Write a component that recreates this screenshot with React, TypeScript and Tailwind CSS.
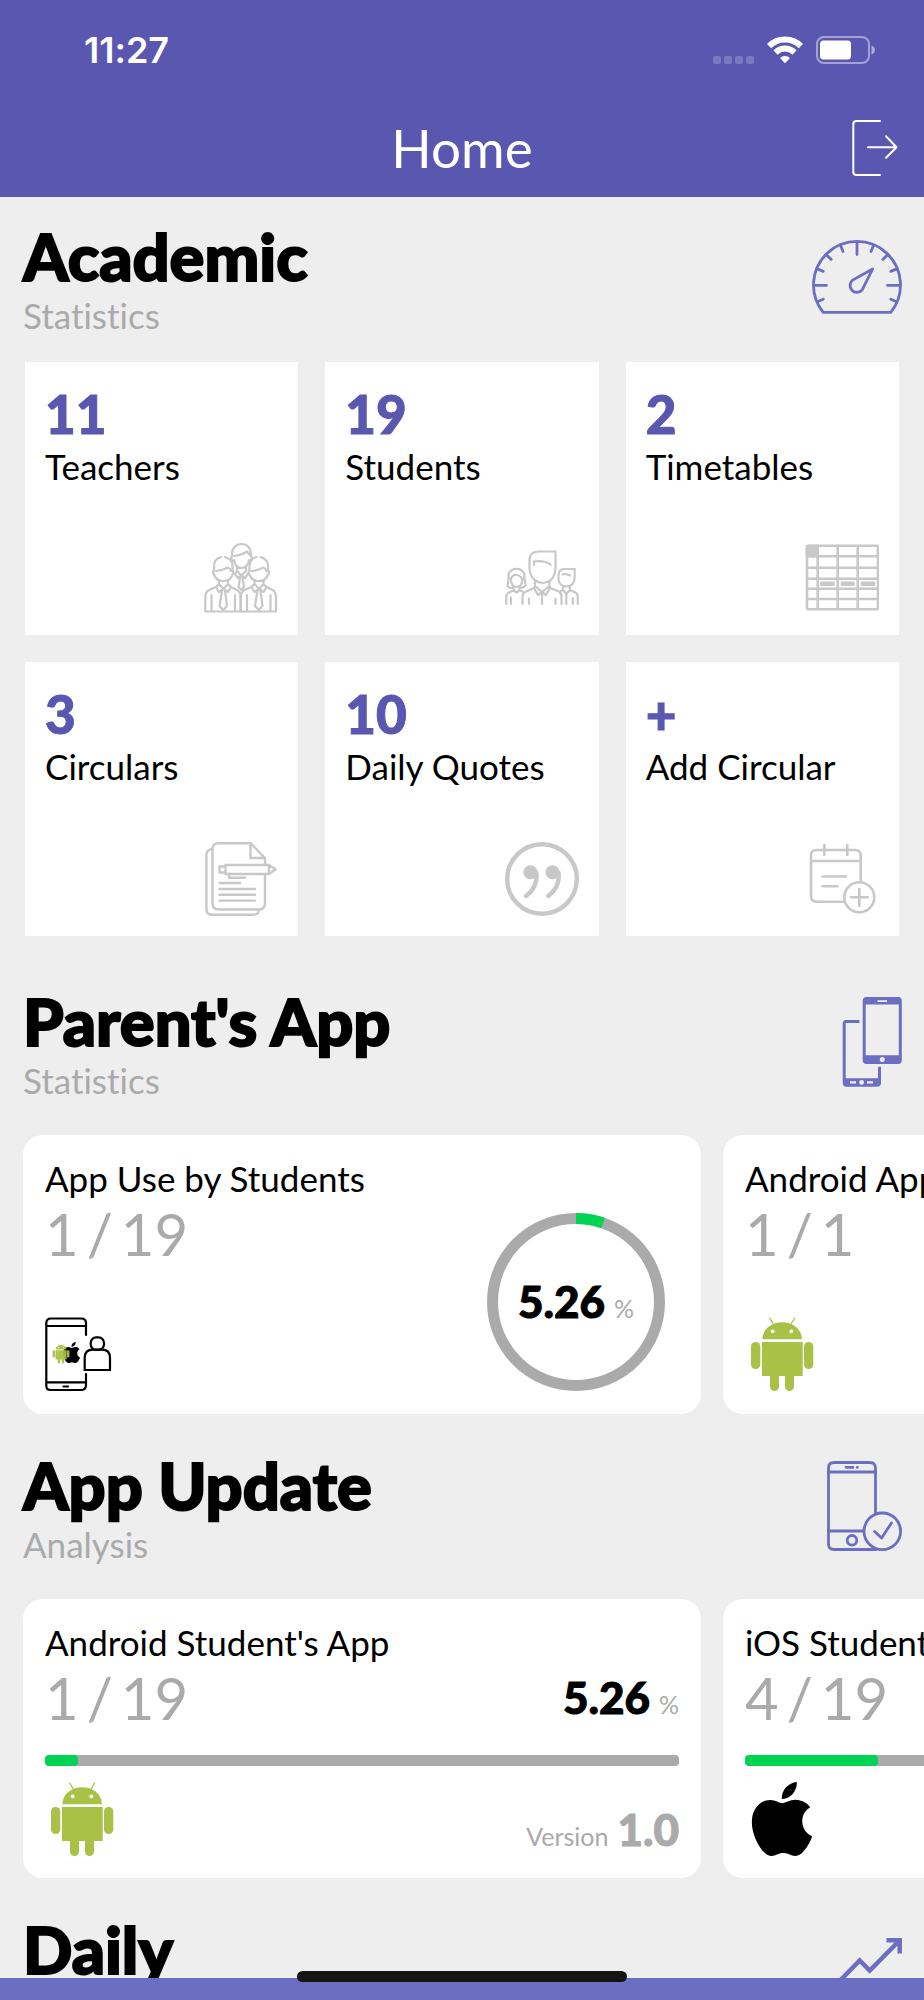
import type { ReactNode } from 'react';
import { SiApple } from 'react-icons/si';

function Wifi() {
    return (
        <svg width="36" height="28" viewBox="0 0 36 28" fill="none" stroke="white" strokeWidth="6">
            <path d="M2.1 10.1A22.5 22.5 0 0 1 33.9 10.1" />
            <path d="M8.5 16.5A13.5 13.5 0 0 1 27.5 16.5" />
            <path d="M18 27.2L13 21.9A7.3 7.3 0 0 1 23 21.9Z" fill="white" stroke="none" />
        </svg>
    );
}

function Battery() {
    return (
        <svg width="59" height="28" viewBox="0 0 59 28" fill="none">
            <rect x="1" y="1" width="52" height="26" rx="7" stroke="white" strokeOpacity="0.45" strokeWidth="2" />
            <rect x="4" y="4.500" width="31" height="19" rx="3.500" fill="white" />
            <path d="M55.500 9.500Q59 11 59 14T55.500 18.500Z" fill="white" fillOpacity="0.5" />
        </svg>
    );
}

function LogoutIcon() {
    return (
        <svg width="46" height="56" viewBox="0 0 46 56" fill="none" stroke="white" strokeWidth="2" strokeLinecap="round" strokeLinejoin="round">
            <path d="M28 1H4.500Q1.300 1 1.300 4V52Q1.300 55 4.500 55H28" />
            <path d="M16 27.300H44.500M34 16.300L44.500 27.300L34 37.700" />
        </svg>
    );
}

const TICKS = [157.5, 22.5, 202.5, 225, 247.5, 292.5, 315, 337.5];

function GaugeIcon() {
    return (
        <svg width="90" height="90" viewBox="0 0 90 90" fill="none" stroke="#6b6ec1" strokeWidth="2.800" strokeLinecap="round">
            <path d="M11.200 80.300A43.500 43.500 0 1 1 78.800 80.300Z" strokeLinejoin="round" />
            <path d="M2.500 53.300H14.500M75.500 53.300H87.500M45 10.500V22.500" />
            {TICKS.map(a => (
                <path key={a} d="M81.500 53.300H88" transform={`rotate(${a} 45 53.300)`} />
            ))}
            <path d="M60.600 37L41.500 47.600A6.800 6.800 0 1 0 50.600 57.200Z" strokeLinejoin="round" />
        </svg>
    );
}

function PhonesIcon() {
    return (
        <svg width="90" height="90" viewBox="0 0 90 90" fill="#6b6ec1">
            <path fillRule="evenodd" d="M54.500 0H86Q89.800 0 89.800 4V63Q89.800 67 86 67H54.500Q50.700 67 50.700 63V4Q50.700 0 54.500 0ZM53.700 7.500V58.300H86.800V7.500ZM65.500 3.300V5H75V3.300ZM70.300 60A2.500 2.500 0 1 0 70.300 65A2.500 2.500 0 1 0 70.300 60Z" />
            <path fillRule="evenodd" d="M34 23H47.500V26H33.700V81.300H66V69.800H69V86Q69 89.700 65 89.700H34.500Q30.700 89.700 30.700 86V27Q30.700 23 34 23ZM38 84.300V86.500H44V84.300ZM55 84.300V86.500H61V84.300ZM49.600 83A2.400 2.400 0 1 0 49.600 87.800A2.400 2.400 0 1 0 49.600 83Z" />
        </svg>
    );
}

function PhoneCheckIcon() {
    return (
        <svg width="90" height="90" viewBox="0 0 90 90" fill="none" stroke="#6b6ec1" strokeWidth="2.800" strokeLinecap="round">
            <path d="M63.500 52.500V7Q63.500 1.500 58 1.500H22Q16.500 1.500 16.500 7V83Q16.500 88.500 22 88.500H64" />
            <path d="M16.500 11H63.500M16.500 70H51M34 6.300H41M45.200 6.300H45.400" />
            <circle cx="40" cy="79.300" r="4.800" />
            <circle cx="70.300" cy="70.300" r="18.300" />
            <path d="M62.500 70.500L69.600 77L79.500 62" strokeLinejoin="round" />
        </svg>
    );
}

function TrendIcon() {
    return (
        <svg width="90" height="90" viewBox="0 0 90 90" fill="none" stroke="#6b6ec1" strokeWidth="4.500">
            <path d="M12 72L47.700 35.500L57.700 45.500L87 16M74.500 15.300H87.700V28.500" />
        </svg>
    );
}

function TileSvg({ width = 2.4, children }: { width?: number; children: ReactNode }) {
    return (
        <svg width="74" height="74" viewBox="0 0 74 74" fill="none" stroke="#c8c8c8" strokeWidth={width} strokeLinecap="round" strokeLinejoin="round">
            {children}
        </svg>
    );
}

// Bust with shirt and tie, drawn around x = 19
function Teacher() {
    return (
        <>
            <path d="M17 16Q10 18 10 25V29M21 16Q28.500 18 28.500 25V29M10 29Q8 31 10.200 34Q12.500 40 19.300 40T28.400 34Q30.500 31 28.500 29M12 30Q18 29.500 24 26.500Q26 27 27 30" />
            <path d="M15 40V43L19.500 48L24 43V40M15 43L12 46L15 51L19.500 48L24 51L27 46L24 43" />
            <path d="M12 46L5 49Q1.300 51 1.300 56V70.500H36.500V56Q36.500 51 33 49L27 46M7.500 54V70M31 54V70" />
            <path d="M18 49.500L15.500 65L19.300 69L23 65L21 49.500" />
        </>
    );
}

function TeachersIcon() {
    return (
        <TileSvg width={2.2}>
            <path d="M28 15V12.500A9.500 9.500 0 0 1 47 12.500V15M28 15Q26 17 28.500 20M47 15Q49 17 46.500 20M30 15Q38 14 43 10.500L46 14M30 19Q31 27 37.300 27T45 19M33 27V30L37.300 34.500L42 30V27M33 30L31 33L34 37L37.300 34.500L41 37L44 33M36 37L34.500 46L37.300 49L40 46L38.500 37" />
            <Teacher />
            <g transform="translate(35.500 0)">
                <Teacher />
            </g>
        </TileSvg>
    );
}

function StudentsIcon() {
    return (
        <TileSvg width={2.2}>
            <path d="M24.500 27V18Q25 10.500 34 10.500H50.500V27Q50 35 46 39Q37.500 45 29.500 39Q25 35 24.500 27ZM29 24V20.500Q39 19 45.500 23.500" />
            <path d="M30 41V45L37 51L44.500 45V41M30 45L29 47L33 54L37 51L41 54L45 47L44.500 45M29 47L20 51Q17.500 52.500 17.500 56V63M45 47L54 50.500Q56.500 52 56.500 56V63M24 57.500V63M50.500 57.500V63M37 51V63" />
            <path d="M2.500 45Q4 37 3.500 33Q6 27.800 11.500 27.800T19.500 33Q19 39 20.800 44Q18 48 14.500 46.500M2.500 45Q5 48 8.500 46.500M5.500 38Q8 33 11 34Q15 34 17.500 38M6 38Q6 46 11.500 46T17.500 38M8.500 46V49.500L11.500 51.500L14.500 49.500V46M8.500 49.500L3 52Q1.200 53.500 1.200 57V63M6 56.500V63M14.500 49.500L17.500 50.500" />
            <path d="M53.500 38Q52.500 28.500 59 28H69.700V36Q69.500 45 61.500 45.500Q54 45 53.500 38ZM57.500 33.500Q61 32.500 65 34.500M58 45.500V49L61.500 53L65 49V45.500M65 49L71 52Q72.800 53 72.800 57V63M61.300 53V63M67.800 57V63M58 49L55 50.500" />
        </TileSvg>
    );
}

function TimetableIcon() {
    return (
        <TileSvg width={2.6}>
            <rect x="2" y="4.700" width="71" height="63.600" rx="1.500" />
            <path d="M12.700 5V68M32.700 5V68M52.700 5V68M2 15.300H73M2 26.700H73M2 37.700H73M2 47.700H73M2 58H73" />
            <path d="M2 5H12.700V15H2ZM16.500 41.700H28.500V43.700H16.500ZM37 41.700H48.500V43.700H37ZM57 41.700H69V43.700H57Z" fill="#c8c8c8" />
        </TileSvg>
    );
}

function CircularIcon() {
    return (
        <TileSvg>
            <path d="M61 22.500V16L46.500 1.200H15Q8.500 1.200 8.500 7V61Q8.500 67.500 15 67.500H55Q61 67.500 61 61V33M46.500 1.200V16H61" />
            <path d="M8 7Q2.400 8 2.400 13V67Q2.400 72.800 8 72.800H49Q54.500 72.800 55 68" />
            <path d="M21.500 23H65L71.500 27.500L65 32H21.500ZM21.500 24.500H15.500V30.500H21.500M65 23V32" />
            <path d="M25 32V35.700H41M15.500 41H36M15.500 47H51M15.500 52.800H51M15.500 58.600H51" />
        </TileSvg>
    );
}

function QuoteIcon() {
    return (
        <TileSvg width={4.4}>
            <circle cx="37" cy="37" r="34.800" />
            <path d="M31.500 31Q32.500 46 21 54M53.700 31Q54.700 46 43.200 54" />
            <path d="M25.300 25.500A4.800 4.800 0 1 0 25.400 25.500ZM47.500 25.500A4.800 4.800 0 1 0 47.600 25.500Z" fill="#c8c8c8" />
        </TileSvg>
    );
}

function AddCircularIcon() {
    return (
        <TileSvg width={2.6}>
            <path d="M55.700 39V13.500Q55.700 8 50 8H11.500Q6 8 6 13.500V54Q6 59.700 11.500 59.700H38.500M6 19H55.500M19.300 3V13M42.300 3V13M17.500 34.500H41M17.500 44.300H32.500" />
            <circle cx="54.300" cy="55.300" r="15" />
            <path d="M46 55.300H62.700M54.300 47V63.700" />
        </TileSvg>
    );
}

function Robot() {
    return (
        <g fill="#a9c147">
            <path d="M24.700 1L28.500 7.500M49.700 1L45.800 7.500" stroke="#a9c147" strokeWidth="1.300" strokeLinecap="round" />
            <path d="M17.300 22.300C18.500 -0.300 55.800 -0.300 57 22.300Z" />
            <circle cx="27.700" cy="14.300" r="1.900" fill="white" />
            <circle cx="46.300" cy="14.300" r="1.900" fill="white" />
            <path d="M17 25H57.700V59H49V69.500A4.500 4.500 0 0 1 40 69.500V59H34V69.500A4.500 4.500 0 0 1 25 69.500V59H17Z" />
            <rect x="6" y="25" width="9.300" height="27" rx="4.600" />
            <rect x="59" y="25" width="9.300" height="27" rx="4.600" />
        </g>
    );
}

function AndroidIcon() {
    return (
        <svg width="74" height="74" viewBox="0 0 74 74">
            <Robot />
        </svg>
    );
}

function AppUserIcon() {
    return (
        <svg width="74" height="74" viewBox="0 0 74 74" fill="none" stroke="black" strokeWidth="2.200" strokeLinecap="round">
            <path d="M41 18V6Q41 1.500 36 1.500H6Q1.300 1.500 1.300 6V69Q1.300 73 6 73H36Q41 73 41 68V57M1.300 9H41M1.300 65.300H41M18.500 69.500H23" />
            <rect x="45.700" y="20.300" width="13.300" height="12.500" rx="5.500" />
            <path d="M39.700 53V41Q39.700 32.700 48 32.700H57Q65 32.700 65 41V53Z" />
            <SiApple x="16" y="25" size={21} color="black" stroke="none" />
            <g transform="translate(6 26.500) scale(0.270)" stroke="none" opacity="0.950">
                <Robot />
            </g>
        </svg>
    );
}

function Donut({ percent }: { percent: number }) {
    return (
        <svg width="178" height="178" viewBox="0 0 178 178" fill="none" strokeWidth="11">
            <circle cx="89" cy="89" r="83.500" stroke="#aaaaaa" />
            <circle cx="89" cy="89" r="83.500" stroke="#00d553" pathLength="100" strokeDasharray={`${percent} 100`} transform="rotate(-90 89 89)" />
        </svg>
    );
}

function SectionTitle({ title, subtitle, icon }: { title: string; subtitle: string; icon: ReactNode }) {
    return (
        <div className="flex items-start justify-between pr-[22px] pl-[23px]">
            <div>
                <h2 className="text-[65px] leading-[78px] font-black [-webkit-text-stroke:2px_black]">{title}</h2>
                <p className="text-[35px] leading-10 text-[#aaaaaa]">{subtitle}</p>
            </div>
            <div className="pt-[15px]">{icon}</div>
        </div>
    );
}

function Count({ used, total }: { used: number; total: number }) {
    return (
        <p className="flex gap-2 text-[58px] leading-[70px] text-[#aaaaaa]">
            <span>{used}</span> <span>/</span> <span>{total}</span>
        </p>
    );
}

function Percent({ value }: { value: number }) {
    return (
        <p className="flex items-baseline gap-[9px]">
            <span className="text-[44px] leading-[52px] font-black [-webkit-text-stroke:1px_black]">{value}</span>
            <span className="text-[25px] text-[#aaaaaa]">%</span>
        </p>
    );
}

const tiles = [
    { value: '11', label: 'Teachers', icon: <TeachersIcon /> },
    { value: '19', label: 'Students', icon: <StudentsIcon /> },
    { value: '2', label: 'Timetables', icon: <TimetableIcon /> },
    { value: '3', label: 'Circulars', icon: <CircularIcon /> },
    { value: '10', label: 'Daily Quotes', icon: <QuoteIcon /> },
    { value: '+', label: 'Add Circular', icon: <AddCircularIcon /> },
];

const usage = [
    { title: 'App Use by Students', used: 1, total: 19, percent: 5.26, icon: <AppUserIcon /> },
    { title: 'Android App Users', used: 1, total: 1, percent: 100, icon: <AndroidIcon /> },
];

const updates = [
    { title: "Android Student's App", used: 1, total: 19, percent: 5.26, version: '1.0', icon: <AndroidIcon /> },
    { title: "iOS Student's App", used: 4, total: 19, percent: 21.05, version: '1.0', icon: <SiApple size={74} /> },
];

export default function App() {
    return (
        <div className="flex h-screen flex-col bg-[#eeeeee] font-['Lato',sans-serif] text-black [font-variant-ligatures:none]">
            {/* Header */}
            <header className="shrink-0 bg-[#5957b0] text-white">
                <div className="flex h-[100px] items-center justify-between pr-[49px] pl-[84px]">
                    <span className="font-['Inter',sans-serif] text-[36px] font-semibold">11:27</span>
                    <div className="flex items-center gap-[13px]">
                        <div className="flex gap-[3px] pt-5">
                            {[0, 1, 2, 3].map(i => (
                                <span key={i} className="size-2 rounded-xs bg-white/20"></span>
                            ))}
                        </div>
                        <Wifi />
                        <Battery />
                    </div>
                </div>
                <div className="grid h-[97px] grid-cols-[1fr_auto_1fr] items-center px-[26px] pb-0.5">
                    <h1 className="col-start-2 text-[53px] leading-[64px]">Home</h1>
                    <button type="button" aria-label="Log out" className="justify-self-end">
                        <LogoutIcon />
                    </button>
                </div>
            </header>

            <main className="min-h-0 flex-1 overflow-y-auto pt-5 [scrollbar-width:none]">
                {/* Academic */}
                <section>
                    <SectionTitle title="Academic" subtitle="Statistics" icon={<GaugeIcon />} />
                    <div className="grid grid-cols-3 gap-[27px] px-[25px] pt-[27px]">
                        {tiles.map(tile => (
                            <button key={tile.label} type="button" className="flex aspect-square flex-col bg-white p-5 text-left">
                                <span className="text-[53px] leading-[64px] font-black text-[#5957b0] [-webkit-text-stroke:1px_#5957b0]">
                                    {tile.value}
                                </span>
                                <span className="text-[35px] leading-10">{tile.label}</span>
                                <span className="mt-auto self-end">{tile.icon}</span>
                            </button>
                        ))}
                    </div>
                </section>

                {/* Parent's App */}
                <section className="pt-[46px]">
                    <SectionTitle title="Parent's App" subtitle="Statistics" icon={<PhonesIcon />} />
                    <div className="flex gap-[22px] overflow-x-auto px-[23px] pt-[35px] [scrollbar-width:none]">
                        {usage.map(card => (
                            <article key={card.title} className="flex w-[678px] max-w-[85%] shrink-0 justify-between rounded-[20px] bg-white px-[22px] pt-[22px] pb-[23px]">
                                <div className="flex flex-col">
                                    <h3 className="text-[35px] leading-[42px]">{card.title}</h3>
                                    <Count used={card.used} total={card.total} />
                                    <div className="mt-auto">{card.icon}</div>
                                </div>
                                <div className="mt-14 mr-[14px] grid place-items-center *:[grid-area:1/1]">
                                    <Donut percent={card.percent} />
                                    <Percent value={card.percent} />
                                </div>
                            </article>
                        ))}
                    </div>
                </section>

                {/* App Update */}
                <section className="pt-8">
                    <SectionTitle title="App Update" subtitle="Analysis" icon={<PhoneCheckIcon />} />
                    <div className="flex gap-[22px] overflow-x-auto px-[23px] pt-[35px] [scrollbar-width:none]">
                        {updates.map(card => (
                            <article key={card.title} className="w-[678px] max-w-[85%] shrink-0 rounded-[20px] bg-white p-[22px]">
                                <h3 className="text-[35px] leading-[42px]">{card.title}</h3>
                                <div className="flex items-center justify-between">
                                    <Count used={card.used} total={card.total} />
                                    <Percent value={card.percent} />
                                </div>
                                <div className="mt-[22px] h-[11px] overflow-hidden rounded bg-[#aaaaaa]">
                                    <div className="h-full rounded bg-[#00d553]" style={{ width: `${card.percent}%` }}></div>
                                </div>
                                <div className="flex items-end justify-between pt-4">
                                    {card.icon}
                                    <p className="flex items-baseline gap-[9px] text-[#aaaaaa]">
                                        <span className="text-[25px]">Version</span>
                                        <span className="text-[44px] leading-[52px] font-black [-webkit-text-stroke:1px_#aaaaaa]">{card.version}</span>
                                    </p>
                                </div>
                            </article>
                        ))}
                    </div>
                </section>

                {/* Daily */}
                <section className="pt-8">
                    <SectionTitle title="Daily" subtitle="Analysis" icon={<TrendIcon />} />
                </section>
            </main>

            <footer className="relative h-[22px] shrink-0 bg-[#6b6ec1]">
                {/* Home indicator */}
                <div className="absolute -top-[7px] left-1/2 h-[11px] w-[330px] -translate-x-1/2 rounded-full bg-[#131413]"></div>
            </footer>
        </div>
    );
}
